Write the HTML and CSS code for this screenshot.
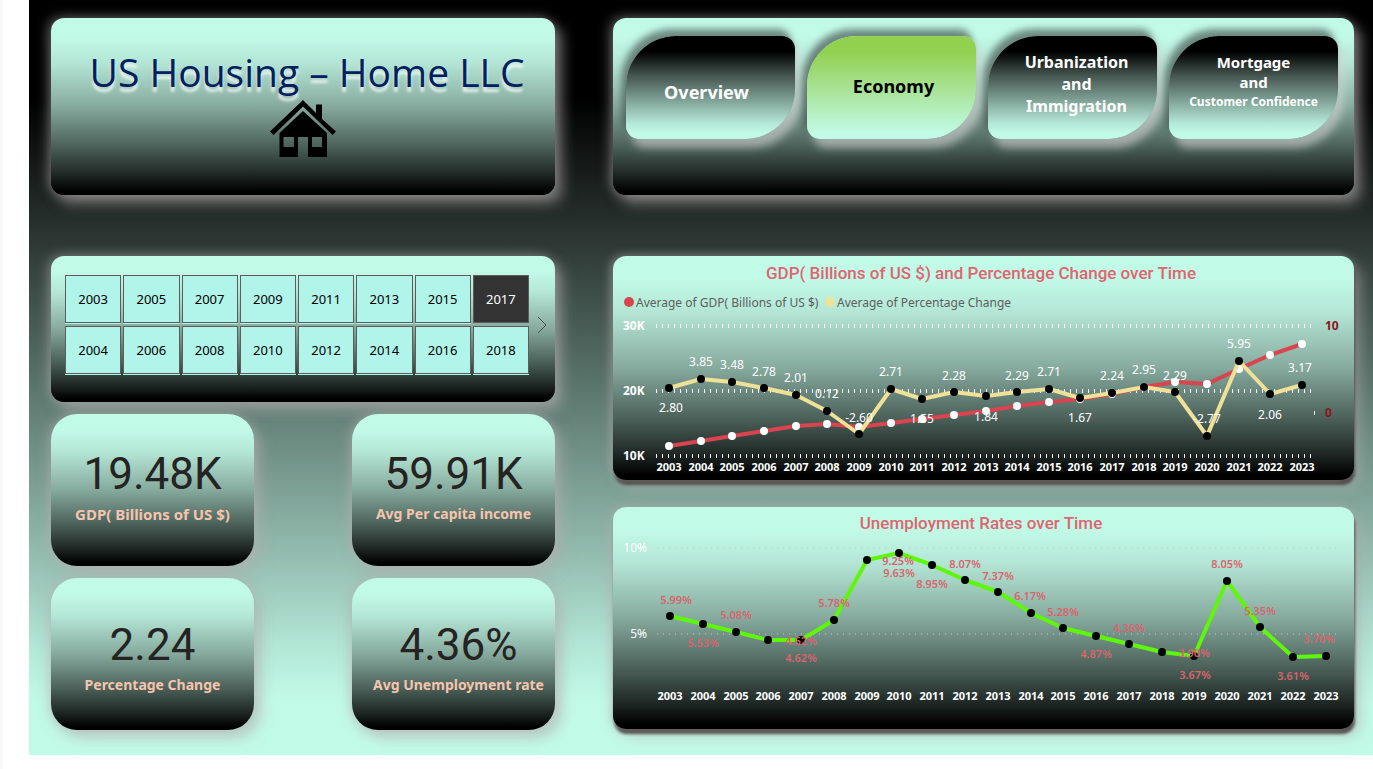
FILE: index.html
```html
<!DOCTYPE html>
<html lang="en">
<head>
<meta charset="utf-8">
<meta name="viewport" content="width=device-width, initial-scale=1">
<title>US Housing – Home LLC</title>
<link rel="stylesheet" href="styles.css">
</head>
<body>
<main class="report">
  <header class="panel brand">
    <h1 class="brand-title">US Housing – Home LLC</h1>
    <svg class="brand-icon" viewBox="0 0 66 57" aria-hidden="true">
      <path d="M33 0 46 13V4.500H52V19L66 31.500 62.500 35 33 6.500 3.500 35 0 31.500Z"/>
      <path fill-rule="evenodd" d="M33 11 57 33V57H38V37H28V57H9.500V33ZM13.500 37V47H24V37ZM42 37V47H52V37Z"/>
    </svg>
  </header>

  <nav class="panel tabs" aria-label="Report pages">
    <a class="tab tab-low" href="#overview">Overview</a>
    <a class="tab tab-active" href="#economy" aria-current="page">Economy</a>
    <a class="tab tab-stack" href="#urbanization"><span>Urbanization</span><span>and</span><span>Immigration</span></a>
    <a class="tab tab-stack tab-compact" href="#mortgage"><span>Mortgage</span><span>and</span><span class="tab-small">Customer Confidence</span></a>
  </nav>

  <div class="column">
    <section class="panel slicer" aria-label="Year">
      <div class="years">
        <button class="year" type="button">2003</button>
        <button class="year" type="button">2005</button>
        <button class="year" type="button">2007</button>
        <button class="year" type="button">2009</button>
        <button class="year" type="button">2011</button>
        <button class="year" type="button">2013</button>
        <button class="year" type="button">2015</button>
        <button class="year year-selected" type="button" aria-pressed="true">2017</button>
        <button class="year" type="button">2004</button>
        <button class="year" type="button">2006</button>
        <button class="year" type="button">2008</button>
        <button class="year" type="button">2010</button>
        <button class="year" type="button">2012</button>
        <button class="year" type="button">2014</button>
        <button class="year" type="button">2016</button>
        <button class="year" type="button">2018</button>
      </div>
      <button class="next" type="button" aria-label="Next years">
        <svg viewBox="0 0 10 18" aria-hidden="true"><path d="M1 1 9 9 1 17"/></svg>
      </button>
    </section>

    <div class="cards">
      <section class="panel card">
        <p class="card-value">19.48K</p>
        <h2 class="card-label card-label-large">GDP( Billions of US $)</h2>
      </section>
      <section class="panel card">
        <p class="card-value">59.91K</p>
        <h2 class="card-label">Avg Per capita income</h2>
      </section>
      <section class="panel card card-lower">
        <p class="card-value">2.24</p>
        <h2 class="card-label">Percentage Change</h2>
      </section>
      <section class="panel card card-lower card-wide">
        <p class="card-value">4.36%</p>
        <h2 class="card-label">Avg Unemployment rate</h2>
      </section>
    </div>
  </div>

  <div class="column charts">
    <section class="panel chart">
      <svg viewBox="0 0 741 224" role="img" aria-label="GDP and percentage change over time">
        <defs>
          <marker id="dot-white" viewBox="0 0 8 8" refX="4" refY="4" markerWidth="8" markerHeight="8" markerUnits="userSpaceOnUse"><circle cx="4" cy="4" r="4" fill="#fff"/></marker>
          <marker id="dot-black" viewBox="0 0 8 8" refX="4" refY="4" markerWidth="8" markerHeight="8" markerUnits="userSpaceOnUse"><circle cx="4" cy="4" r="4" fill="#000"/></marker>
        </defs>
        <text class="chart-title" x="368" y="23">GDP( Billions of US $) and Percentage Change over Time</text>
        <circle cx="16" cy="46" r="5" fill="#d9444f"/>
        <text class="legend" x="23" y="51">Average of GDP( Billions of US $)</text>
        <circle cx="217" cy="46" r="5" fill="#f0e199"/>
        <text class="legend" x="224" y="51">Average of Percentage Change</text>
        <path class="grid-thick" d="M43 70H703M43 135H703M43 200H703M701 157H703"/>
        <g class="axis-bold">
          <text x="10" y="74">30K</text><text x="10" y="139">20K</text><text x="10" y="204">10K</text>
        </g>
        <g class="axis-red">
          <text x="712" y="74">10</text><text x="712" y="161">0</text>
        </g>
        <polyline class="line line-red" points="56,190 88,185 119,180 151,175 183,170 214,168 246,171 278,167 309,163 341,159 373,155 404,150 436,146 467,143 499,138 531,131 562,126 594,128 626,113 657,99 689,88"/>
        <polyline class="line line-yellow" points="56,132 88,123 119,126 151,132 183,139 214,155 246,178 278,133 309,143 341,136 373,140 404,136 436,133 467,142 499,137 531,131 562,136 594,180 626,105 657,138 689,129"/>
        <g class="value-light">
          <text x="58" y="156">2.80</text><text x="88" y="110">3.85</text><text x="119" y="113">3.48</text>
          <text x="151" y="120">2.78</text><text x="183" y="126">2.01</text><text x="214" y="142">0.12</text>
          <text x="246" y="166">-2.60</text><text x="278" y="120">2.71</text><text x="309" y="167">1.55</text>
          <text x="341" y="124">2.28</text><text x="373" y="165">1.84</text><text x="404" y="124">2.29</text>
          <text x="436" y="120">2.71</text><text x="467" y="166">1.67</text><text x="499" y="124">2.24</text>
          <text x="531" y="118">2.95</text><text x="562" y="124">2.29</text><text x="594" y="167">-2.77</text>
          <text x="626" y="92">5.95</text><text x="657" y="163">2.06</text><text x="687" y="116">3.17</text>
        </g>
        <g class="axis-year">
          <text x="56" y="215">2003</text><text x="88" y="215">2004</text><text x="119" y="215">2005</text>
          <text x="151" y="215">2006</text><text x="183" y="215">2007</text><text x="214" y="215">2008</text>
          <text x="246" y="215">2009</text><text x="278" y="215">2010</text><text x="309" y="215">2011</text>
          <text x="341" y="215">2012</text><text x="373" y="215">2013</text><text x="404" y="215">2014</text>
          <text x="436" y="215">2015</text><text x="467" y="215">2016</text><text x="499" y="215">2017</text>
          <text x="531" y="215">2018</text><text x="562" y="215">2019</text><text x="594" y="215">2020</text>
          <text x="626" y="215">2021</text><text x="657" y="215">2022</text><text x="689" y="215">2023</text>
        </g>
      </svg>
    </section>

    <section class="panel chart">
      <svg viewBox="0 0 741 222" role="img" aria-label="Unemployment rates over time">
        <text class="chart-title" x="368" y="22">Unemployment Rates over Time</text>
        <path class="grid-thin" d="M44 41H723M44 127H723"/>
        <g class="axis-light">
          <text x="34" y="45">10%</text><text x="34" y="131">5%</text>
        </g>
        <polyline class="line line-green" points="57,109 90,117 123,125 155,133 188,133 221,113 254,53 286,46 319,58 352,73 385,85 418,106 450,121 483,129 516,137 549,145 581,149 614,74 647,120 680,150 713,149"/>
        <g class="value-red">
          <text x="63" y="97">5.99%</text><text x="90" y="140">5.53%</text><text x="123" y="112">5.08%</text>
          <text x="188" y="138">4.62%</text><text x="188" y="155">4.62%</text><text x="221" y="100">5.78%</text>
          <text x="285" y="58">9.25%</text><text x="286" y="70">9.63%</text><text x="319" y="81">8.95%</text>
          <text x="352" y="61">8.07%</text><text x="385" y="73">7.37%</text><text x="417" y="93">6.17%</text>
          <text x="450" y="109">5.28%</text><text x="483" y="151">4.87%</text><text x="516" y="125">4.36%</text>
          <text x="581" y="150">3.90%</text><text x="582" y="172">3.67%</text><text x="614" y="61">8.05%</text>
          <text x="647" y="108">5.35%</text><text x="680" y="173">3.61%</text><text x="706" y="136">3.70%</text>
        </g>
        <g class="axis-year">
          <text x="57" y="193">2003</text><text x="90" y="193">2004</text><text x="123" y="193">2005</text>
          <text x="155" y="193">2006</text><text x="188" y="193">2007</text><text x="221" y="193">2008</text>
          <text x="254" y="193">2009</text><text x="286" y="193">2010</text><text x="319" y="193">2011</text>
          <text x="352" y="193">2012</text><text x="385" y="193">2013</text><text x="418" y="193">2014</text>
          <text x="450" y="193">2015</text><text x="483" y="193">2016</text><text x="516" y="193">2017</text>
          <text x="549" y="193">2018</text><text x="581" y="193">2019</text><text x="614" y="193">2020</text>
          <text x="647" y="193">2021</text><text x="680" y="193">2022</text><text x="713" y="193">2023</text>
        </g>
      </svg>
    </section>
  </div>
</main>
</body>
</html>
```
FILE: styles.css
```css
:root {
  --mint: #c2fae8;
  --ui: "Noto Sans", "Open Sans", sans-serif;
  --display: Roboto, "Liberation Sans", sans-serif;
}

* {
  box-sizing: border-box;
}

body {
  margin: 0;
  padding-left: 26px;
  border-left: 3px solid #f8f8f8;
  min-height: 100vh;
  background: #fff;
  font-family: var(--ui);
}

h1, h2, p {
  margin: 0;
}

.report {
  display: grid;
  grid-template-columns: 504fr 741fr;
  gap: 61px 58px;
  align-items: start;
  padding: 18px 19px 25px 22px;
  background: linear-gradient(#000 0%, #000 13%, #262e2b 29%, #5f7b72 53%, #98c1b4 75%, #b3e8d7 86%, var(--mint) 93%);
}

.panel {
  border-radius: 13px;
  background: linear-gradient(var(--mint) 0%, var(--mint) 10%, #b4e6d6 25%, #86aa9e 50%, #4a5f58 73%, #1a211f 90%, #000 98%);
  box-shadow: -3px -1px 12px rgba(180, 175, 175, 0.5), 7px 8px 14px rgba(180, 175, 175, 0.6);
}

.brand {
  display: flex;
  flex-direction: column;
  align-items: center;
  height: 177px;
  padding-top: 26px;
}

.brand-title {
  padding-left: 8px;
  color: #002060;
  font-family: "Open Sans", "Noto Sans", sans-serif;
  font-size: 39px;
  font-weight: 400;
  line-height: 56px;
  white-space: nowrap;
  text-shadow: 0 5px 3px rgba(255, 255, 255, 0.8);
}

.brand-icon {
  width: 66px;
  height: 57px;
}

.tabs {
  display: grid;
  grid-template-columns: repeat(4, 1fr);
  align-content: start;
  gap: 12px;
  height: 177px;
  padding: 18px 16px 0 13px;
}

.tab {
  display: flex;
  flex-direction: column;
  align-items: center;
  justify-content: center;
  height: 103px;
  border-radius: 50px 13px 50px 13px;
  background: linear-gradient(#000 0%, #000 15%, #44544e 38%, #86aa9e 65%, #b4e8d8 85%, var(--mint) 95%);
  box-shadow: -4px -7px 7px rgba(60, 75, 70, 0.65), 6px 9px 9px rgba(215, 215, 215, 0.6);
  color: #fff;
  font-size: 18px;
  font-weight: 700;
  line-height: 22px;
  text-decoration: none;
  white-space: nowrap;
}

.tab-low {
  padding: 8px 8px 0 0;
}

.tab-active {
  padding: 0 0 4px 4px;
  background: linear-gradient(#92d050 0%, #92d050 15%, var(--mint) 95%);
  color: #000;
}

.tab-stack {
  padding: 0 0 8px 8px;
  font-size: 16px;
}

.tab-compact {
  padding: 0 0 12px;
  font-size: 15px;
  line-height: 20px;
}

.tab-small {
  font-size: 12px;
}

.column {
  display: grid;
  gap: 12px;
}

.slicer {
  display: flex;
  align-items: flex-start;
  height: 146px;
  padding: 19px 6px 0 14px;
}

.years {
  display: grid;
  flex: 1;
  grid-template-columns: repeat(8, 1fr);
  grid-auto-rows: 48px;
  gap: 3px 2px;
}

.year {
  padding: 0;
  border: 1px solid #5c5c5c;
  background: #b0f4ea;
  box-shadow: 0 1px 0 #b0f4ea;
  color: #000;
  font: 13px/20px var(--ui);
}

.year-selected {
  background: #333;
  box-shadow: none;
  color: #fff;
}

.next {
  align-self: stretch;
  display: flex;
  width: 20px;
  padding: 41px 0 0 8px;
  border: 0;
  background: none;
}

.next svg {
  width: 10px;
  height: 18px;
  fill: none;
  stroke: #55504e;
}

.cards {
  display: grid;
  grid-template-columns: 203fr 203fr;
  gap: 12px 98px;
}

.card {
  height: 152px;
  padding-top: 34px;
  border-radius: 26px;
  text-align: center;
  white-space: nowrap;
}

.card-lower {
  padding-top: 41px;
}

.card-wide {
  padding-left: 10px;
}

.card-value {
  color: #252423;
  font-family: var(--display);
  font-size: 44px;
  line-height: 52px;
}

.card-label {
  color: #f6c4ad;
  font-size: 14px;
  font-weight: 700;
  line-height: 28px;
}

.card-label-large {
  font-size: 15px;
}

.charts {
  gap: 27px;
}

.chart {
  box-shadow: -3px -1px 10px rgba(180, 175, 175, 0.5), 1px 5px 3px rgba(70, 62, 62, 0.9), 7px 8px 14px rgba(180, 175, 175, 0.5);
}

.chart svg {
  display: block;
  width: 100%;
  height: auto;
}

.chart-title {
  fill: #df6570;
  font: 500 17px var(--display);
  text-anchor: middle;
}

.legend {
  fill: #605e5c;
  font-size: 12px;
}

.grid-thick {
  stroke: #fff;
  stroke-width: 4;
  stroke-dasharray: 1 5;
}

.grid-thin {
  stroke: #c9c5c5;
  stroke-width: 1;
  stroke-dasharray: 1 5;
}

.line {
  fill: none;
  stroke-width: 4;
  stroke-linejoin: round;
}

.line-red {
  stroke: #d9444f;
  marker: url(#dot-white);
}

.line-yellow {
  stroke: #f0e199;
  marker: url(#dot-black);
}

.line-green {
  stroke: #5ef70a;
  marker: url(#dot-black);
}

.axis-bold {
  fill: #fff;
  font-size: 12px;
  font-weight: 700;
}

.axis-red {
  fill: #8b1520;
  font-size: 12px;
  font-weight: 700;
}

.axis-light {
  fill: #fff;
  font-size: 12px;
  text-anchor: end;
}

.axis-year {
  fill: #fff;
  font-size: 11px;
  font-weight: 700;
  text-anchor: middle;
}

.value-light {
  fill: #fff;
  font-size: 12px;
  text-anchor: middle;
}

.value-red {
  fill: #d9646e;
  font-size: 11px;
  font-weight: 600;
  text-anchor: middle;
}
```
